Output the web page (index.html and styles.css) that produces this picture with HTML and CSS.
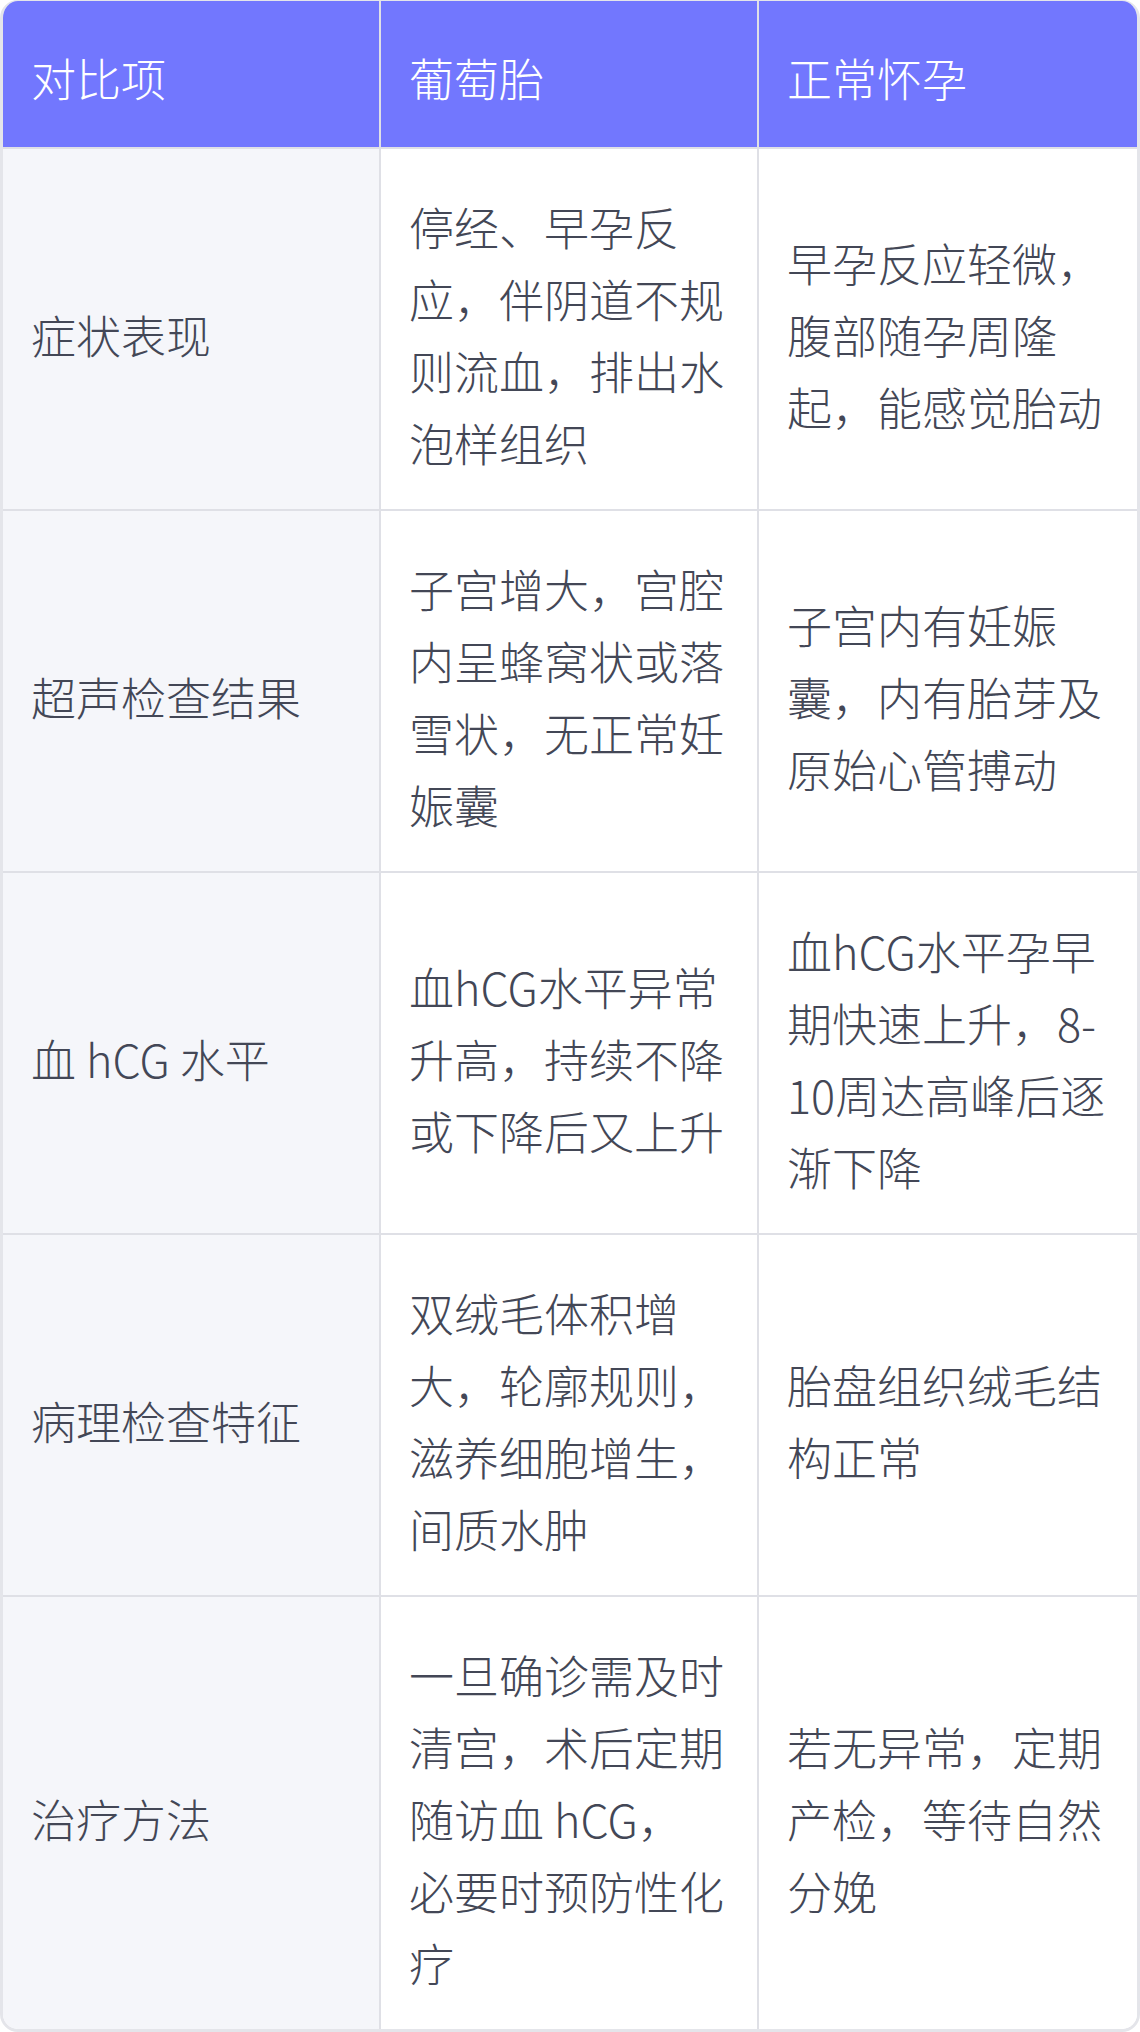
FILE: index.html
```html
<!DOCTYPE html>
<html lang="zh-CN">
<head>
  <meta charset="UTF-8" />
  <meta name="viewport" content="width=device-width, initial-scale=1.0" />
  <title>葡萄胎与正常怀孕对比</title>
  <link rel="stylesheet" href="styles.css">
</head>
<body>
  <div class="table-card">
    <table class="compare">
      <colgroup>
        <col class="col-item">
        <col class="col-mole">
        <col>
      </colgroup>
      <thead>
        <tr>
          <th>对比项</th>
          <th>葡萄胎</th>
          <th>正常怀孕</th>
        </tr>
      </thead>
      <tbody>
        <tr>
          <td>症状表现</td>
          <td>停经、早孕反应，伴阴道不规则流血，排出水泡样组织</td>
          <td>早孕反应轻微，腹部随孕周隆起，能感觉胎动</td>
        </tr>
        <tr>
          <td>超声检查结果</td>
          <td>子宫增大，宫腔内呈蜂窝状或落雪状，无正常妊娠囊</td>
          <td>子宫内有妊娠囊，内有胎芽及原始心管搏动</td>
        </tr>
        <tr>
          <td>血 hCG 水平</td>
          <td>血hCG水平异常升高，持续不降或下降后又上升</td>
          <td>血hCG水平孕早期快速上升，8-10周达高峰后逐渐下降</td>
        </tr>
        <tr>
          <td>病理检查特征</td>
          <td>双绒毛体积增大，轮廓规则，滋养细胞增生，间质水肿</td>
          <td>胎盘组织绒毛结构正常</td>
        </tr>
        <tr>
          <td>治疗方法</td>
          <td>一旦确诊需及时清宫，术后定期随访血 hCG，必要时预防性化疗</td>
          <td>若无异常，定期产检，等待自然分娩</td>
        </tr>
      </tbody>
    </table>
  </div>
</body>
</html>
```

FILE: styles.css
```css
* { margin: 0; padding: 0; box-sizing: border-box; }
body {
  font-family: "Noto Sans CJK SC", "Noto Sans", sans-serif;
  background-color: #fff;
  color: #434756;
}
.table-card {
  border: 3px solid #e4e5ea;
  border-top-width: 1px;
  border-radius: 18px;
  overflow: hidden;
}
.compare {
  width: 100%;
  table-layout: fixed;
  border-collapse: separate;
  border-spacing: 0;
  font-size: 45px;
  font-weight: 300;
  line-height: 72px;
}
.col-item { width: 376px; }
.col-mole { width: 378px; }
.compare th,
.compare td {
  padding: 42px 32px 30px 28px;
  text-align: left;
  vertical-align: middle;
}
.compare th:last-child,
.compare td:last-child { padding-right: 26px; }
.compare th {
  background-color: #7277fe;
  color: #fff;
  font-weight: 300;
  padding-top: 41px;
  padding-bottom: 33px;
  border-bottom: 2px solid #dfe0e6;
}
.compare th + th,
.compare td + td { border-left: 2px solid #dfe0e6; }
.compare tbody tr + tr td { border-top: 2px solid #dfe0e6; }
.compare td { background-color: #fff; }
.compare td:first-child { background-color: #f5f6fa; }
```
